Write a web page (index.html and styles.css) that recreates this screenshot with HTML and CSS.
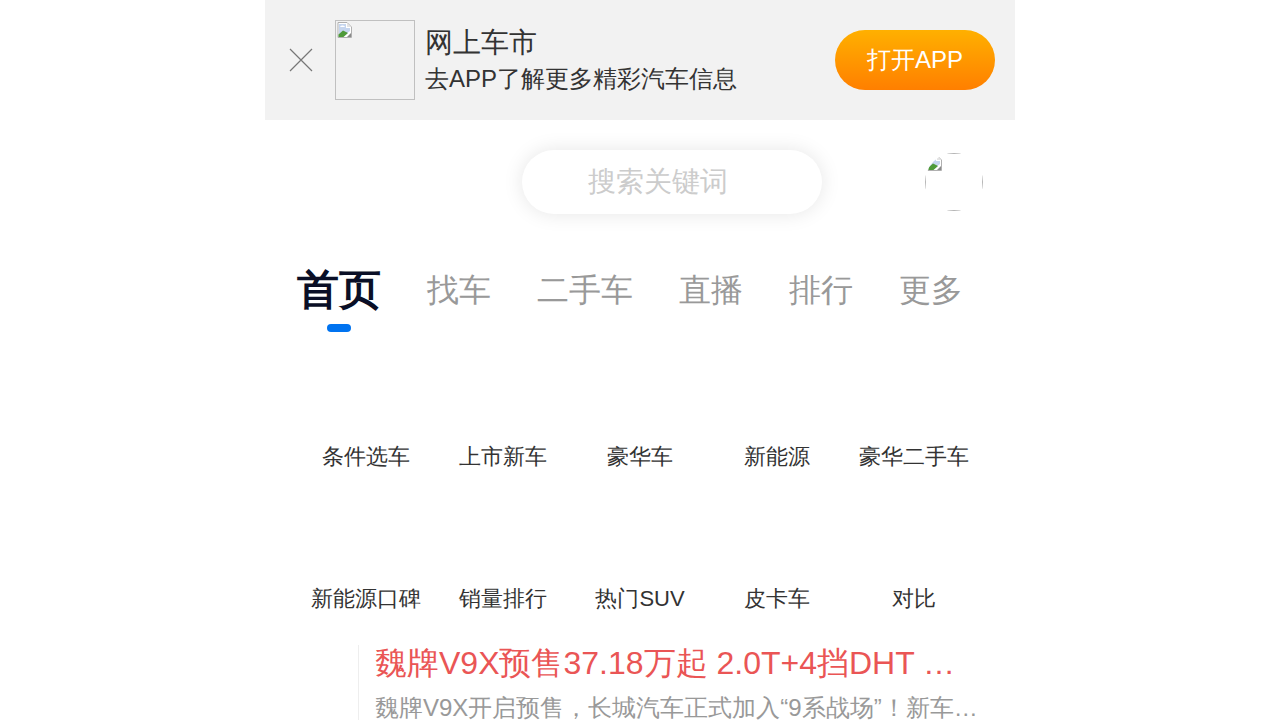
FILE: index.html
```html
<!DOCTYPE html>
<html>
<head>
<meta charset="UTF-8">
<meta name="viewport" content="width=device-width, initial-scale=1.0">
<title>网上车市</title>
<link rel="stylesheet" href="styles.css">
</head>
<body>
    <div class="wrapper">
        <div class="app-bar">
            <svg class="close-icon" viewBox="0 0 24 24"><path d="M1 1L23 23M23 1L1 23" stroke="#777" stroke-width="1.2" fill="none"/></svg>
            <div class="app-logo">
                <svg class="broken-icon" viewBox="0 0 16 16"><path d="M1 0.5H10L14.5 5V15.5H1Z" fill="#fff" stroke="#b0b0b0"/><path d="M2 2H9V6H13V9L9 12H2Z" fill="#c5d5ee"/><path d="M3 5C4 3 7 3 8 5Z" fill="#fff"/><path d="M1.500 15V12.500L6 8.500L11 11L6.500 15Z" fill="#4e9a3a"/><path d="M10 1L14 5H10Z" fill="#e4e4e4"/><path d="M10 15L14 11V15Z" fill="#8a8a8a"/></svg>
            </div>
            <div class="app-text">
                <div class="app-name">网上车市</div>
                <div class="app-desc">去APP了解更多精彩汽车信息</div>
            </div>
            <div class="app-btn">打开APP</div>
        </div>

        <div class="search-row">
            <div class="search-box">搜索关键词</div>
            <div class="avatar">
                <div class="avatar-img">
                    <svg class="broken-icon" viewBox="0 0 16 16"><path d="M1 0.5H10L14.5 5V15.5H1Z" fill="#fff" stroke="#b0b0b0"/><path d="M2 2H9V6H13V9L9 12H2Z" fill="#c5d5ee"/><path d="M3 5C4 3 7 3 8 5Z" fill="#fff"/><path d="M1.500 15V12.500L6 8.500L11 11L6.500 15Z" fill="#4e9a3a"/><path d="M10 1L14 5H10Z" fill="#e4e4e4"/><path d="M10 15L14 11V15Z" fill="#8a8a8a"/></svg>
                </div>
            </div>
        </div>

        <div class="nav">
            <div class="nav-item active">首页</div>
            <div class="nav-item">找车</div>
            <div class="nav-item">二手车</div>
            <div class="nav-item">直播</div>
            <div class="nav-item">排行</div>
            <div class="nav-item">更多</div>
        </div>

        <div class="menu">
            <div class="menu-item">条件选车</div>
            <div class="menu-item">上市新车</div>
            <div class="menu-item">豪华车</div>
            <div class="menu-item">新能源</div>
            <div class="menu-item">豪华二手车</div>
            <div class="menu-item">新能源口碑</div>
            <div class="menu-item">销量排行</div>
            <div class="menu-item">热门SUV</div>
            <div class="menu-item">皮卡车</div>
            <div class="menu-item">对比</div>
        </div>

        <div class="headline">
            <div class="headline-title">魏牌V9X预售37.18万起 2.0T+4挡DHT 长城汽车正式加入战场</div>
            <div class="headline-desc">魏牌V9X开启预售，长城汽车正式加入“9系战场”！新车定位大型SUV</div>
        </div>
    </div>
</body>
</html>
```
FILE: styles.css
```css
html, body{
    margin: 0;
    height: 720px;
    overflow: hidden;
    background: #fff;
}
body{
    font-family: "Liberation Sans", sans-serif;
    color: #333;
}
.wrapper{
    width: 750px;
    margin: 0 auto;
}

/* 상단 앱 배너 */
.app-bar{
    height: 120px;
    background: #f2f2f2;
    display: flex;
    align-items: center;
    padding: 0 20px 0 24px;
    box-sizing: border-box;
}
.close-icon{
    width: 24px;
    height: 24px;
    margin-right: 22px;
}
.app-logo{
    width: 80px;
    height: 80px;
    padding: 1px;
    border: 1px solid #c0c0c0;
    box-sizing: border-box;
    margin-right: 10px;
}
.broken-icon{
    display: block;
    width: 16px;
    height: 16px;
}
.app-text{
    flex: 1;
}
.app-name{
    font-size: 28px;
    line-height: 40px;
}
.app-desc{
    font-size: 24px;
    line-height: 32px;
    margin-bottom: 2px;
}
.app-btn{
    width: 160px;
    height: 60px;
    line-height: 60px;
    border-radius: 30px;
    text-align: center;
    font-size: 24px;
    color: #fff;
    background: linear-gradient(#ffb000, #ff7f00);
}

.search-row{
    height: 124px;
    display: flex;
    align-items: center;
    padding-left: 257px;
}
.search-box{
    width: 300px;
    height: 64px;
    line-height: 64px;
    border-radius: 32px;
    padding-left: 66px;
    box-sizing: border-box;
    font-size: 28px;
    color: #ccc;
    background: #fff;
    box-shadow: 0 0 20px rgba(0, 0, 0, 0.1);
}
.avatar{
    width: 58px;
    height: 58px;
    margin-left: 103px;
    border-radius: 50%;
    overflow: hidden;
}
.avatar-img{
    height: 100%;
    padding: 1px;
    border: 1px solid #b5b5b5;
    box-sizing: border-box;
}

.nav{
    display: flex;
    align-items: center;
    gap: 46px;
    height: 92px;
    padding-left: 32px;
}
.nav-item{
    font-size: 32px;
    line-height: 44px;
    color: #999;
    position: relative;
}
.nav-item.active{
    font-size: 42px;
    font-weight: bold;
    color: #0a0f26;
}
.nav-item.active::after{
    content: "";
    position: absolute;
    left: 30px;
    bottom: -20px;
    width: 24px;
    height: 8px;
    border-radius: 4px;
    background: #0073f0;
}

.menu{
    display: grid;
    grid-template-columns: repeat(5, 137px);
    grid-auto-rows: 142px;
    padding: 0 32.5px;
    margin-top: 3px;
    height: 284px;
}
.menu-item{
    display: flex;
    align-items: flex-end;
    justify-content: center;
    font-size: 22px;
    line-height: 32px;
    padding-bottom: 8px;
    box-sizing: border-box;
}

.headline{
    margin: 22px 0 0 93px;
    padding-left: 16px;
    width: 608px;
    height: 90px;
    border-left: 1px solid #eee;
}
.headline-title{
    font-size: 32px;
    line-height: 36px;
    color: #ea5555;
    white-space: nowrap;
    overflow: hidden;
    text-overflow: ellipsis;
}
.headline-desc{
    font-size: 24px;
    line-height: 54px;
    color: #999;
    white-space: nowrap;
    overflow: hidden;
    text-overflow: ellipsis;
}
```
